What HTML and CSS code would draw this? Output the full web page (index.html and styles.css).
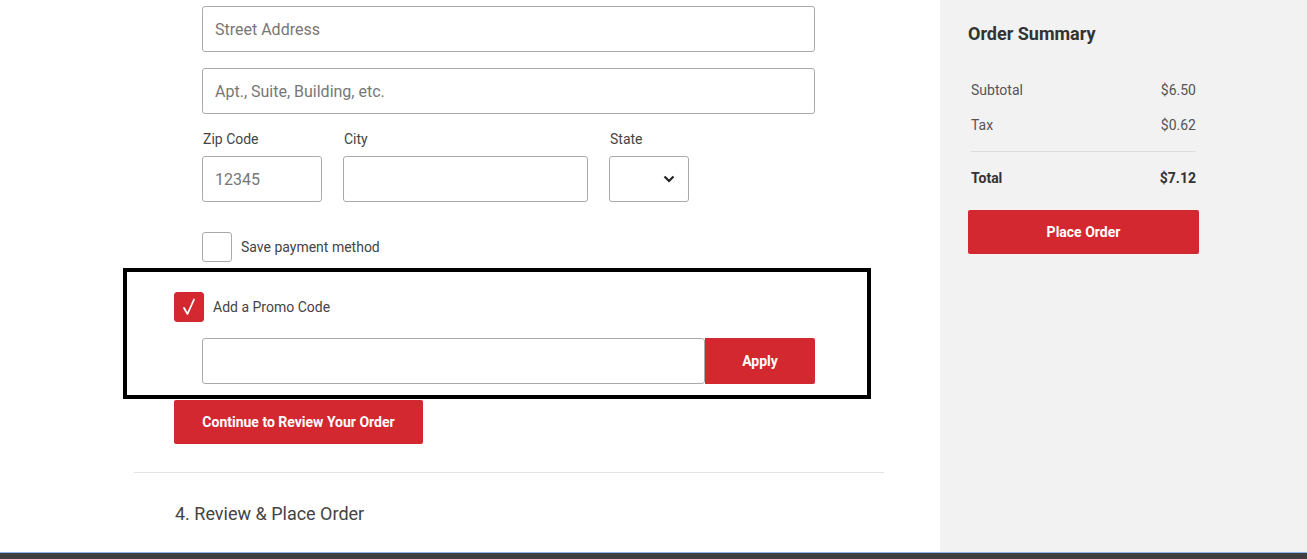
FILE: index.html
```html
<!DOCTYPE html>
<html>
<head>
  <meta name="viewport" content="width=device-width, initial-scale=1.0">
  <link rel="stylesheet" href="styles.css">
</head>
<body>
  <div class="page">
    <div class="checkout">
      <div class="fields">
        <input class="text-input" type="text" placeholder="Street Address">
        <input class="text-input" type="text" placeholder="Apt., Suite, Building, etc.">

        <div class="field-row">
          <div class="field zip">
            <label>Zip Code</label>
            <input class="text-input" type="text" placeholder="12345">
          </div>
          <div class="field city">
            <label>City</label>
            <input class="text-input" type="text">
          </div>
          <div class="field state">
            <label>State</label>
            <div class="select-box">
              <svg width="12" height="8" viewBox="0 0 12 8"><polyline points="1.5,1.5 6,6 10.5,1.5" fill="none" stroke="#222" stroke-width="2.2"/></svg>
            </div>
          </div>
        </div>

        <div class="check-row save">
          <span class="checkbox"></span>
          <span class="check-label">Save payment method</span>
        </div>
      </div>

      <div class="promo-box">
        <div class="check-row">
          <span class="checkbox checked">
            <svg width="14" height="18" viewBox="0 0 14 18"><path d="M2 10 L5.5 16 L12 1.5" fill="none" stroke="#fff" stroke-width="1.8" stroke-linecap="round" stroke-linejoin="round"/></svg>
          </span>
          <span class="check-label">Add a Promo Code</span>
        </div>
        <div class="promo-row">
          <input class="text-input promo-input" type="text">
          <button class="btn apply">Apply</button>
        </div>
      </div>

      <button class="btn continue">Continue to Review Your Order</button>

      <div class="divider"></div>

      <div class="step-title">4. Review &amp; Place Order</div>
    </div>

    <div class="sidebar">
      <div class="summary">
        <h2>Order Summary</h2>
        <div class="summary-row"><span>Subtotal</span><span>$6.50</span></div>
        <div class="summary-row"><span>Tax</span><span>$0.62</span></div>
        <div class="summary-row total"><span>Total</span><span>$7.12</span></div>
        <button class="btn place-order">Place Order</button>
      </div>
    </div>
  </div>
  <div class="footer-bar"></div>
</body>
</html>
```

FILE: styles.css
```css
* {
  box-sizing: border-box;
}
body {
  margin: 0;
  font-family: Roboto, 'Liberation Sans', sans-serif;
  color: #444;
  background: #fff;
  overflow: hidden;
}
.page {
  display: flex;
  height: 552px;
}
.checkout {
  width: 940px;
  padding: 6px 0 0 134px;
}
.fields {
  width: 750px;
  padding-left: 68px;
}
.text-input {
  display: block;
  width: 613px;
  height: 46px;
  border: 1px solid #aaa;
  border-radius: 3px;
  padding: 0 12px;
  font-family: inherit;
  font-size: 16px;
  color: #444;
  background: #fff;
  outline: none;
}
.text-input::placeholder {
  color: #777;
}
.text-input + .text-input {
  margin-top: 16px;
}
.field-row {
  display: flex;
  gap: 21px;
  margin-top: 16px;
}
.field label {
  display: block;
  font-size: 14px;
  line-height: 18px;
  height: 18px;
  margin: 0 0 8px 1px;
  color: #444;
}
.zip .text-input {
  width: 120px;
}
.city .text-input {
  width: 245px;
}
.select-box {
  width: 80px;
  height: 46px;
  border: 1px solid #aaa;
  border-radius: 3px;
  display: flex;
  align-items: center;
  justify-content: flex-end;
  padding-right: 13px;
}
.check-row {
  display: flex;
  align-items: center;
  gap: 9px;
}
.save {
  margin-top: 30px;
}
.checkbox {
  width: 30px;
  height: 30px;
  border: 1px solid #aaa;
  border-radius: 3px;
  display: flex;
  align-items: center;
  justify-content: center;
  background: #fff;
}
.checkbox.checked {
  background: #d3282f;
  border-color: #d3282f;
}
.check-label {
  font-size: 14px;
  color: #444;
}
.promo-box {
  width: 748px;
  margin: 6px 0 0 -11px;
  border: 4px solid #000;
  padding: 20px 0 11px 47px;
}
.promo-row {
  display: flex;
  margin: 16px 0 0 28px;
}
.promo-input {
  width: 503px;
}
.btn {
  border: none;
  background: #d3282f;
  color: #fff;
  font-family: inherit;
  font-weight: 700;
  font-size: 14px;
  border-radius: 2px;
  cursor: pointer;
}
.apply {
  width: 110px;
  height: 46px;
  border-radius: 0 2px 2px 0;
}
.continue {
  display: block;
  width: 249px;
  height: 44px;
  margin: 1px 0 0 40px;
}
.divider {
  width: 750px;
  height: 1px;
  background: #e3e3e3;
  margin-top: 28px;
}
.step-title {
  font-size: 18px;
  line-height: 24px;
  margin: 29px 0 0 41px;
  color: #444;
}
.sidebar {
  flex: 1;
  background: #f2f2f2;
  padding: 22px 0 0 28px;
}
.summary {
  width: 231px;
}
.summary h2 {
  margin: 0;
  font-size: 18px;
  line-height: 24px;
  font-weight: 700;
  color: #333;
}
.summary-row {
  display: flex;
  justify-content: space-between;
  font-size: 14px;
  line-height: 18px;
  color: #555;
  padding: 0 3px;
  margin-top: 17px;
}
.summary-row:nth-of-type(1) {
  margin-top: 35px;
}
.summary-row.total {
  font-weight: 700;
  color: #333;
  border-top: 1px solid #ddd;
  margin: 17px 3px 0;
  padding: 17px 0 0;
}
.place-order {
  display: block;
  width: 231px;
  height: 44px;
  margin-top: 23px;
}
.footer-bar {
  height: 7px;
  background: #3f3f3f;
  border-top: 1px solid #8fb4ee;
}
```
